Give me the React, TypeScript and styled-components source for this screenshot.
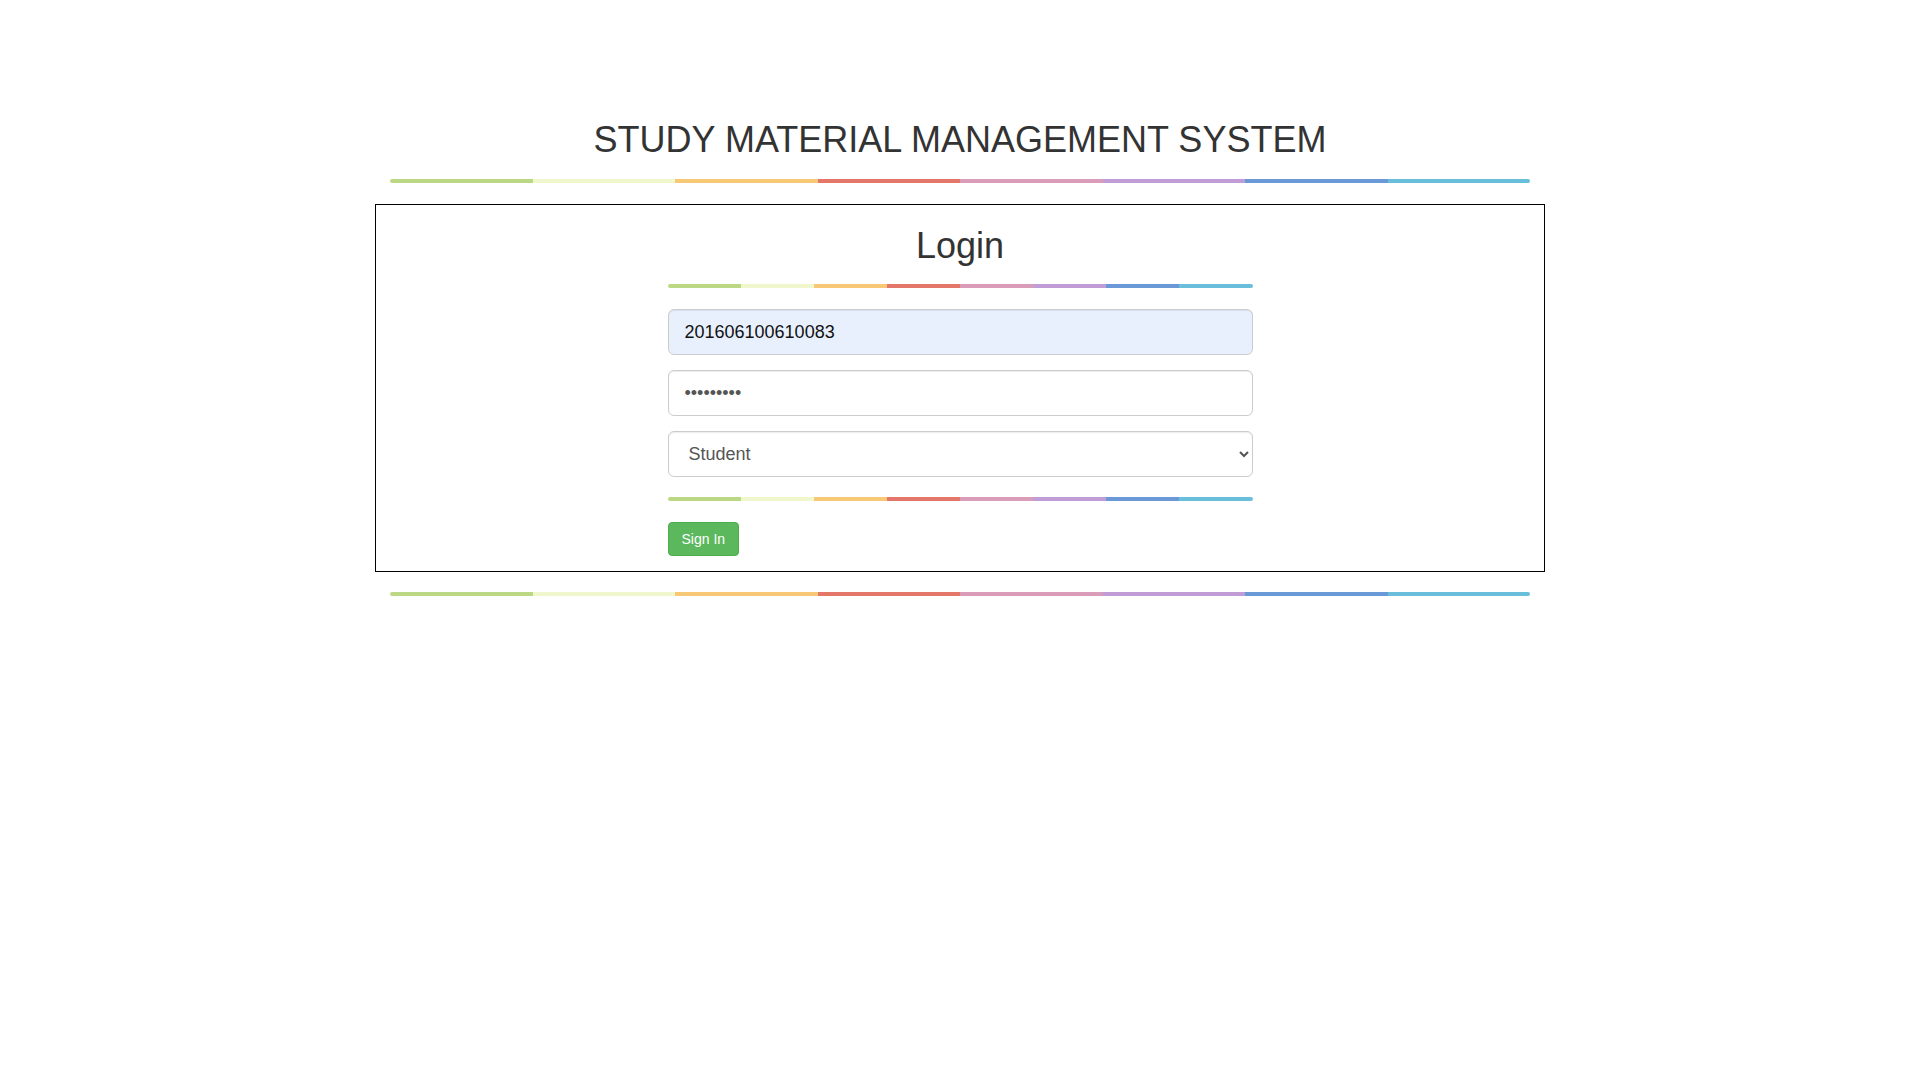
import styled, { createGlobalStyle } from "styled-components";

const GlobalStyle = createGlobalStyle`
  html, body {
    margin: 0;
    padding: 0;
    background: #fff;
  }
  body {
    font-family: "Liberation Sans", Arial, Helvetica, sans-serif;
    font-size: 14px;
    color: #333;
  }
  * {
    box-sizing: border-box;
  }
`;

const RAINBOW = [
  "#bcd884",
  "#f0f7cd",
  "#f7c977",
  "#e47769",
  "#d99db9",
  "#c09dd6",
  "#6b98d6",
  "#69bfda",
];

const Container = styled.div`
  width: 1170px;
  margin: 0 auto;
  padding-top: 120px;
`;

const Title = styled.h1`
  margin: 0;
  font-size: 36px;
  line-height: 40px;
  font-weight: 500;
  text-align: center;
  color: #333;
`;

const Bar = styled.div<{ $top: number; $bottom: number; $inset: number }>`
  display: flex;
  height: 4px;
  margin: ${(p) => `${p.$top}px ${p.$inset}px ${p.$bottom}px`};
  border-radius: 2px;
  overflow: hidden;
`;

const Segment = styled.span<{ $color: string }>`
  flex: 1;
  background: ${(p) => p.$color};
`;

const Box = styled.div`
  border: 1px solid #000;
  padding-bottom: 15px;
`;

const Heading = styled.h2`
  margin: 21px 0 18px;
  font-size: 36px;
  line-height: 40px;
  font-weight: 500;
  text-align: center;
  color: #333;
`;

const Form = styled.form`
  width: 585px;
  margin: 0 auto;
  display: flex;
  flex-direction: column;
`;

const Fields = styled.div`
  display: flex;
  flex-direction: column;
  gap: 15px;
  margin-top: 21px;
`;

const Input = styled.input<{ $filled?: boolean }>`
  display: block;
  width: 100%;
  height: 46px;
  padding: 10px 16px;
  font-family: "Liberation Sans", Arial, sans-serif;
  font-size: 18px;
  line-height: 1.33;
  color: ${(p) => (p.$filled ? "#111" : "#555")};
  background: ${(p) => (p.$filled ? "#e8f0fe" : "#fff")};
  border: 1px solid #ccc;
  border-radius: 6px;
  box-shadow: inset 0 1px 1px rgba(0, 0, 0, 0.075);
  outline: none;
`;

const Select = styled.select`
  display: block;
  width: 100%;
  height: 46px;
  padding: 10px 16px;
  font-family: "Liberation Sans", Arial, sans-serif;
  font-size: 18px;
  color: #555;
  background: #fff;
  border: 1px solid #ccc;
  border-radius: 6px;
  box-shadow: inset 0 1px 1px rgba(0, 0, 0, 0.075);
  outline: none;
`;

const Actions = styled.div`
  display: flex;
`;

const Button = styled.button`
  height: 34px;
  padding: 6px 13px;
  font-family: "Liberation Sans", Arial, sans-serif;
  font-size: 14px;
  line-height: 20px;
  color: #fff;
  background: #5cb85c;
  border: 1px solid #4cae4c;
  border-radius: 4px;
  cursor: pointer;
`;

function Rainbow({ top, bottom, inset = 0 }: { top: number; bottom: number; inset?: number }) {
  return (
    <Bar $top={top} $bottom={bottom} $inset={inset}>
      {RAINBOW.map((c) => (
        <Segment key={c} $color={c} />
      ))}
    </Bar>
  );
}

export default function App() {
  return (
    <>
      <GlobalStyle />
      <Container>
        <Title>STUDY MATERIAL MANAGEMENT SYSTEM</Title>
        <Rainbow top={19} bottom={21} inset={15} />
        <Box>
          <Heading>Login</Heading>
          <Form onSubmit={(e) => e.preventDefault()}>
            <Rainbow top={0} bottom={0} />
            <Fields>
              <Input $filled type="text" defaultValue="201606100610083" />
              <Input type="password" defaultValue="123456789" />
              <Select defaultValue="student">
                <option value="student">Student</option>
                <option value="faculty">Faculty</option>
                <option value="admin">Admin</option>
              </Select>
            </Fields>
            <Rainbow top={20} bottom={21} />
            <Actions>
              <Button type="submit">Sign In</Button>
            </Actions>
          </Form>
        </Box>
        <Rainbow top={20} bottom={0} inset={15} />
      </Container>
    </>
  );
}
